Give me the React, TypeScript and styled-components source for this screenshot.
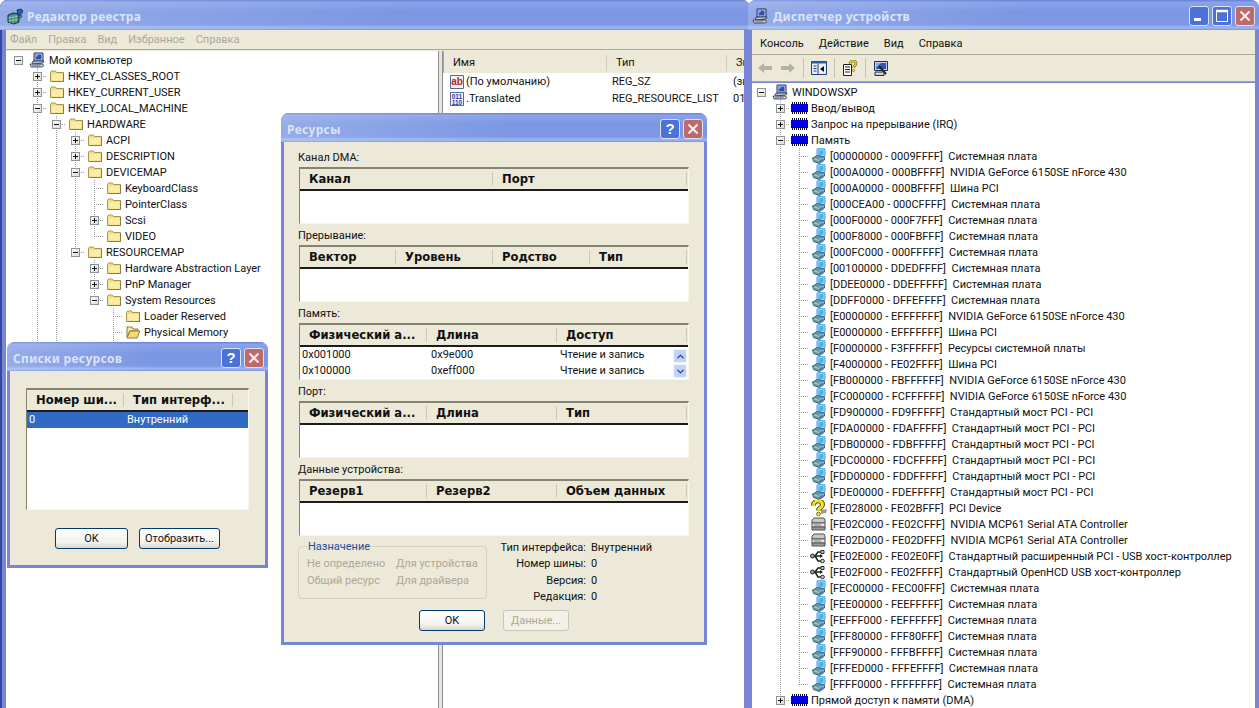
import React from "react"
import styled, { createGlobalStyle } from "styled-components"
import { ChevronUp, ChevronDown } from "lucide-react"

const GlobalStyle = createGlobalStyle`
  html, body {
    margin: 0;
    background: #fff;
    overflow: hidden;
  }
  body {
    font-family: Roboto, "Liberation Sans", Arial, sans-serif;
    font-size: 11px;
    color: #111;
  }
`

/* ---------- icons ---------- */

function FolderIcon(props: { open?: boolean }) {
  if (props.open) {
    return (
      <svg width="16" height="16" viewBox="0 0 16 16">
        <path d="M2 3h5l1 2h5v2H5L2 13z" fill="#f6e7a0" stroke="#8d7d35" />
        <path d="M5 7h10l-3 7H2z" fill="#f3dc76" stroke="#8d7d35" />
      </svg>
    )
  }
  return (
    <svg width="16" height="16" viewBox="0 0 16 16">
      <path d="M1.5 4.5l1-1.5h4l1 1.5h7v9h-13z" fill="#f3dd7c" stroke="#a8974a" />
      <path d="M2.5 6h11v6.5h-11z" fill="#fbeda8" />
      <path d="M14.5 5v8.5h-12" fill="none" stroke="#8d7d35" />
    </svg>
  )
}

function ComputerIcon() {
  return (
    <svg width="18" height="16" viewBox="0 0 18 16">
      <path d="M5 1h9v8H5z" fill="#cfd6e6" stroke="#26304f" />
      <path d="M6.5 2.5h6v5h-6z" fill="#2b50b8" />
      <path d="M7 2.5h3l-3 3z" fill="#7fa6e8" />
      <path d="M3 10l3-1h9l-1 2-10 1z" fill="#b9c0cf" stroke="#26304f" strokeWidth="0.8" />
      <path d="M1 12h12l2 1.5-2 1.5H2z" fill="#d5d9e2" stroke="#26304f" strokeWidth="0.8" />
      <path d="M3 13h9M3 14h8" stroke="#59627a" strokeWidth="0.6" />
    </svg>
  )
}

function RegeditIcon() {
  return (
    <svg width="17" height="17" viewBox="0 0 17 17">
      <path d="M1 7l5-2 6 1v8l-5 2-6-2z" fill="#3f7f7a" stroke="#12323a" />
      <path d="M3 7.5v7M6 7v8.5M9 6.5v8M1.5 10l9-1.5M1.5 13l9-1.5" stroke="#a8dcc6" strokeWidth="0.7" />
      <path d="M10 2l4-1 2 2-3 5-2-1z" fill="#2f5fae" stroke="#12284a" strokeWidth="0.8" />
      <path d="M12 8l2-1 1 2-2 1z" fill="#7a8fb8" stroke="#12284a" strokeWidth="0.6" />
    </svg>
  )
}

function ChipIcon() {
  return (
    <svg width="17" height="16" viewBox="0 0 17 16">
      <path d="M1.500 2v2M3.500 2v2M5.500 2v2M7.500 2v2M9.500 2v2M11.500 2v2M13.500 2v2M15.500 2v2M1.500 12v2M3.500 12v2M5.500 12v2M7.500 12v2M9.500 12v2M11.500 12v2M13.500 12v2M15.500 12v2" stroke="#111" />
      <path d="M0 4h17v8H0z" fill="#0000e6" />
      <path d="M0 11.500h17" stroke="#00007a" />
    </svg>
  )
}

function SystemIcon() {
  return (
    <svg width="16" height="16" viewBox="0 0 16 16">
      <path d="M6 1l6-1 2 1v7l-6 2-2-1z" fill="#9adcf8" stroke="#4f9fd8" />
      <path d="M7.500 2.500l5-1v5l-5 1.500z" fill="#4fb2ee" />
      <path d="M1.500 10l5-2.500 7 1.500v3l-5 3.500-6-2z" fill="#6f97a8" stroke="#3f6484" />
      <path d="M3 11l5 1.500 4.500-2.500" fill="none" stroke="#a4dcc4" />
      <path d="M8 13l4-2.500v1.500l-4 2.500z" fill="#3f6fc0" />
    </svg>
  )
}

function UnknownIcon() {
  return (
    <svg width="18" height="16" viewBox="0 0 18 16">
      <path d="M11 10l6-1-1 4-5 1z" fill="#9a9a9a" />
      <path d="M3.500 5.500c0-6 9-6 9-1 0 3.500-4 3-4 6" fill="none" stroke="#5f5500" strokeWidth="5" />
      <path d="M3.500 5.500c0-6 9-6 9-1 0 3.500-4 3-4 6" fill="none" stroke="#f4e424" strokeWidth="3" />
      <circle cx="8.500" cy="14" r="1.900" fill="#f4e424" stroke="#5f5500" strokeWidth="0.800" />
    </svg>
  )
}

function ControllerIcon() {
  return (
    <svg width="17" height="16" viewBox="0 0 17 16">
      <path d="M4 2h10l1 2v3H2V4z" fill="#c8c8c8" stroke="#555" />
      <path d="M2 7h13v4H2z" fill="#e6e6e6" stroke="#555" />
      <path d="M2 11h13v3H2z" fill="#9a9a9a" stroke="#555" />
      <path d="M4 9h7" stroke="#777" />
    </svg>
  )
}

function UsbIcon() {
  return (
    <svg width="18" height="16" viewBox="0 0 18 16">
      <path d="M1 8h11M5 8l3-4h3M5 8l3 5h3" fill="none" stroke="#222" strokeWidth="1.5" />
      <path d="M13 8l-3-2v4z" fill="#222" />
      <circle cx="2.5" cy="8" r="2" fill="#9aa0a8" stroke="#222" />
      <path d="M11 2.5h3v3h-3z" fill="#d0d4da" stroke="#222" />
      <circle cx="12.5" cy="13" r="1.8" fill="#d0d4da" stroke="#222" />
    </svg>
  )
}

function StringValueIcon() {
  return (
    <svg width="16" height="16" viewBox="0 0 16 16">
      <path d="M1.5 1.5h13v13h-13z" fill="#f4f4f4" stroke="#5a6a8c" />
      <text x="8" y="10.5" textAnchor="middle" fontFamily="Liberation Sans" fontWeight="700" fontSize="10" fill="#c02020">ab</text>
    </svg>
  )
}

function BinaryValueIcon() {
  return (
    <svg width="16" height="16" viewBox="0 0 16 16">
      <path d="M1.5 1.5h13v13h-13z" fill="#f4f4f4" stroke="#5a6a8c" />
      <text x="8" y="7.5" textAnchor="middle" fontFamily="Liberation Sans" fontWeight="700" fontSize="6.5" fill="#1c3fa8">011</text>
      <text x="8" y="13.5" textAnchor="middle" fontFamily="Liberation Sans" fontWeight="700" fontSize="6.5" fill="#1c3fa8">110</text>
    </svg>
  )
}

function ArrowTool(props: { flip?: boolean }) {
  return (
    <svg width="16" height="16" viewBox="0 0 16 16" style={props.flip ? { transform: "scaleX(-1)" } : undefined}>
      <path d="M1 8l6-5v3h8v4H7v3z" fill="#b4b2a4" />
    </svg>
  )
}

function TreeToggleTool() {
  return (
    <svg width="16" height="16" viewBox="0 0 16 16">
      <path d="M.5 1.5h15v13H.5z" fill="#e8eef8" stroke="#1f3f7a" />
      <path d="M.5 1.5h15v2H.5z" fill="#2f5ca8" />
      <path d="M7 3.5v11" stroke="#1f3f7a" />
      <path d="M2.5 6h3M2.5 8.5h3M2.5 11h3" stroke="#1f3f7a" />
      <path d="M13 6v6L9 9z" fill="#111" />
    </svg>
  )
}

function HelpPageTool() {
  return (
    <svg width="16" height="17" viewBox="0 0 16 17">
      <path d="M1.5 4.5h8v11h-8z" fill="#fff" stroke="#222" />
      <path d="M3 7h5M3 9.5h5M3 12h5" stroke="#222" />
      <path d="M8 4c0-4 6-4 6-.5 0 2-2.5 2-2.5 4.500" fill="none" stroke="#6f6200" strokeWidth="2.600" />
      <path d="M8 4c0-4 6-4 6-.5 0 2-2.5 2-2.5 4.500" fill="none" stroke="#f2da3c" strokeWidth="1.300" />
      <circle cx="11.500" cy="10.500" r="1.200" fill="#f2da3c" stroke="#6f6200" strokeWidth="0.500" />
    </svg>
  )
}

function DeviceTool() {
  return (
    <svg width="16" height="17" viewBox="0 0 16 17">
      <path d="M1.500 1.500h13v9h-13z" fill="#c8d4ea" stroke="#1f2f50" />
      <path d="M3 3h10v6H3z" fill="#2f55b8" />
      <path d="M3 3h5L3 8z" fill="#7fa6e8" />
      <path d="M6 6l7 8" stroke="#222" strokeWidth="2" />
      <path d="M2 12h9v3.500H2z" fill="#cfd6c0" stroke="#1f2f50" />
    </svg>
  )
}

/* ---------- window frame ---------- */

const Desktop = styled.div`
  position: relative;
  width: 1259px;
  height: 708px;
  overflow: hidden;
  background: #fff;
`

const XpWindow = styled.section<{ $left: number; $top: number; $width: number; $height: number; $frame?: number }>`
  position: absolute;
  isolation: isolate;
  left: ${(p) => p.$left}px;
  top: ${(p) => p.$top}px;
  width: ${(p) => p.$width}px;
  height: ${(p) => p.$height}px;
  box-sizing: border-box;
  display: flex;
  flex-direction: column;
  border-radius: 8px 8px 0 0;
  background: #7785d4;
  padding: 0 ${(p) => p.$frame ?? 3}px ${(p) => p.$frame ?? 3}px;
  overflow: hidden;
`

const RegistryFrame = styled(XpWindow)`
  box-shadow: inset 2px 0 #33489f;
`

const TitleBar = styled.header<{ $height: number; $frame: number; $left?: number }>`
  flex: 0 0 ${(p) => p.$height}px;
  box-sizing: border-box;
  margin: 0 -${(p) => p.$frame}px;
  padding: 2px 4px 0 ${(p) => p.$left ?? 6}px;
  display: flex;
  align-items: center;
  gap: 3px;
  background:
    linear-gradient(90deg, rgba(255, 255, 255, 0.2), rgba(255, 255, 255, 0) 55%),
    linear-gradient(180deg, #6480d8 0, #8aa3ea 8%, #7b96e2 40%, #7c98e4 82%, #a0b8f2 93%, #7590de 100%);
`

const TitleText = styled.h1`
  flex: 1;
  margin: 0;
  padding-top: 1px;
  font-family: "Noto Sans", "Liberation Sans", sans-serif;
  font-size: 12px;
  font-weight: 700;
  letter-spacing: 0.3px;
  color: #d9e4f8;
`

const CaptionButton = styled.span<{ $danger?: boolean }>`
  width: 20px;
  height: 20px;
  box-sizing: border-box;
  border: 1px solid #dbe3f6;
  border-radius: 3px;
  display: flex;
  align-items: center;
  justify-content: center;
  background: ${(p) => (p.$danger ? "#bd6a6c" : "#4c71d8")};
  color: #fff;
  font-family: "Liberation Sans", sans-serif;
  font-size: 15px;
  font-weight: 700;
`

function CloseGlyph() {
  return (
    <svg width="12" height="12" viewBox="0 0 12 12">
      <path d="M1.500 1.500l9 9M10.500 1.500l-9 9" stroke="#f6eaea" strokeWidth="2.200" />
    </svg>
  )
}

function MinimizeGlyph() {
  return (
    <svg width="12" height="12" viewBox="0 0 12 12">
      <path d="M1 8h7v3H1z" fill="#fff" />
    </svg>
  )
}

function MaximizeGlyph() {
  return (
    <svg width="14" height="14" viewBox="0 0 14 14">
      <path d="M1.500 1.500h11v11h-11z" fill="none" stroke="#fff" />
      <path d="M1 2h12" stroke="#fff" strokeWidth="2.500" />
    </svg>
  )
}

const MenuBar = styled.nav<{ $height: number; $offset: number; $gap: number; $muted?: boolean }>`
  flex: 0 0 ${(p) => p.$height}px;
  box-sizing: border-box;
  display: flex;
  align-items: center;
  gap: ${(p) => p.$gap}px;
  padding: ${(p) => (p.$height > 20 ? "2px" : "0")} 0 0 ${(p) => p.$offset}px;
  background: #ece9d8;
  border-bottom: 1px solid #aca899;
  color: ${(p) => (p.$muted ? "#aca899" : "#111")};
`

/* ---------- tree ---------- */

type TreeNode = {
  label: string
  icon: React.ReactNode
  children?: TreeNode[]
  collapsed?: boolean
}

const TreeList = styled.div<{ $left: number }>`
  padding: 1px 0 0 ${(p) => p.$left}px;
  white-space: pre;
`

const TreeRowBox = styled.div`
  height: 16px;
  display: flex;
  align-items: center;
`

const GuideCell = styled.span<{ $kind: "none" | "pipe" | "tee" | "ell" }>`
  position: relative;
  flex: 0 0 19px;
  height: 16px;

  &::before {
    content: "";
    display: ${(p) => (p.$kind === "none" ? "none" : "block")};
    position: absolute;
    left: 9px;
    top: 0;
    width: 1px;
    height: ${(p) => (p.$kind === "ell" ? "8px" : "16px")};
    background: repeating-linear-gradient(180deg, #9a9a9a 0 1px, transparent 1px 2px);
  }

  &::after {
    content: "";
    display: ${(p) => (p.$kind === "tee" || p.$kind === "ell" ? "block" : "none")};
    position: absolute;
    left: 9px;
    top: 8px;
    width: 10px;
    height: 1px;
    background: repeating-linear-gradient(90deg, #9a9a9a 0 1px, transparent 1px 2px);
  }
`

const Expander = styled.span<{ $closed: boolean }>`
  position: absolute;
  z-index: 1;
  left: 5px;
  top: 4px;
  width: 9px;
  height: 9px;
  box-sizing: border-box;
  border: 1px solid #8c9298;
  background: linear-gradient(135deg, #fff, #dcdcd2);

  &::before {
    content: "";
    position: absolute;
    left: 1px;
    top: 3px;
    width: 5px;
    height: 1px;
    background: #111;
  }

  &::after {
    content: "";
    display: ${(p) => (p.$closed ? "block" : "none")};
    position: absolute;
    left: 3px;
    top: 1px;
    width: 1px;
    height: 5px;
    background: #111;
  }
`

const TreeIconCell = styled.span`
  flex: 0 0 19px;
  height: 16px;
  display: flex;
  align-items: center;
  justify-content: center;
`

const TreeLabel = styled.span`
  padding: 2px 0 0 2px;
  line-height: 16px;
`

function renderTree(nodes: TreeNode[], level: number, pipes: boolean[]): React.ReactNode[] {
  return nodes.flatMap((node, index) => {
    const last = index === nodes.length - 1
    const kids = node.children ?? []
    const hasExpander = node.collapsed || kids.length > 0
    const connector = level === 0 ? "none" : last ? "ell" : "tee"
    const row = (
      <TreeRowBox key={`${level}-${index}-${node.label}`}>
        {pipes.map((on, i) => (
          <GuideCell key={i} $kind={on ? "pipe" : "none"} />
        ))}
        <GuideCell $kind={connector}>
          {hasExpander && <Expander $closed={!!node.collapsed} />}
        </GuideCell>
        <TreeIconCell>{node.icon}</TreeIconCell>
        <TreeLabel>{node.label}</TreeLabel>
      </TreeRowBox>
    )
    if (node.collapsed) return [row]
    return [row, ...renderTree(kids, level + 1, [...pipes, level > 0 && !last])]
  })
}

const folder = (label: string, children?: TreeNode[], collapsed?: boolean): TreeNode => ({
  label,
  icon: <FolderIcon />,
  children,
  collapsed,
})

// the last rows sit behind the small dialog, only their guide lines and a folder tip show
const registryTree: TreeNode[] = [
  {
    label: "Мой компьютер",
    icon: <ComputerIcon />,
    children: [
      folder("HKEY_CLASSES_ROOT", undefined, true),
      folder("HKEY_CURRENT_USER", undefined, true),
      folder("HKEY_LOCAL_MACHINE", [
        folder("HARDWARE", [
          folder("ACPI", undefined, true),
          folder("DESCRIPTION", undefined, true),
          folder("DEVICEMAP", [
            folder("KeyboardClass"),
            folder("PointerClass"),
            folder("Scsi", undefined, true),
            folder("VIDEO"),
          ]),
          folder("RESOURCEMAP", [
            folder("Hardware Abstraction Layer", undefined, true),
            folder("PnP Manager", undefined, true),
            folder("System Resources", [
              folder("Loader Reserved"),
              { label: "Physical Memory", icon: <FolderIcon open /> },
              folder(""),
            ]),
          ]),
        ]),
        folder("", undefined, true),
      ]),
      folder("", undefined, true),
    ],
  },
]

const BOARD = "Системная плата"
const NVIDIA = "NVIDIA GeForce 6150SE nForce 430"
const PCI_BUS = "Шина PCI"
const BRIDGE = "Стандартный мост PCI - PCI"
const SATA = "NVIDIA MCP61 Serial ATA Controller"

const memoryRanges: [string, string, React.ReactNode?][] = [
  ["00000000 - 0009FFFF", BOARD],
  ["000A0000 - 000BFFFF", NVIDIA],
  ["000A0000 - 000BFFFF", PCI_BUS],
  ["000CEA00 - 000CFFFF", BOARD],
  ["000F0000 - 000F7FFF", BOARD],
  ["000F8000 - 000FBFFF", BOARD],
  ["000FC000 - 000FFFFF", BOARD],
  ["00100000 - DDEDFFFF", BOARD],
  ["DDEE0000 - DDEFFFFF", BOARD],
  ["DDFF0000 - DFFEFFFF", BOARD],
  ["E0000000 - EFFFFFFF", NVIDIA],
  ["E0000000 - EFFFFFFF", PCI_BUS],
  ["F0000000 - F3FFFFFF", "Ресурсы системной платы"],
  ["F4000000 - FE02FFFF", PCI_BUS],
  ["FB000000 - FBFFFFFF", NVIDIA],
  ["FC000000 - FCFFFFFF", NVIDIA],
  ["FD900000 - FD9FFFFF", BRIDGE],
  ["FDA00000 - FDAFFFFF", BRIDGE],
  ["FDB00000 - FDBFFFFF", BRIDGE],
  ["FDC00000 - FDCFFFFF", BRIDGE],
  ["FDD00000 - FDDFFFFF", BRIDGE],
  ["FDE00000 - FDEFFFFF", BRIDGE],
  ["FE028000 - FE02BFFF", "PCI Device", <UnknownIcon />],
  ["FE02C000 - FE02CFFF", SATA, <ControllerIcon />],
  ["FE02D000 - FE02DFFF", SATA, <ControllerIcon />],
  ["FE02E000 - FE02E0FF", "Стандартный расширенный PCI - USB хост-контроллер", <UsbIcon />],
  ["FE02F000 - FE02FFFF", "Стандартный OpenHCD USB хост-контроллер", <UsbIcon />],
  ["FEC00000 - FEC00FFF", BOARD],
  ["FEE00000 - FEEFFFFF", BOARD],
  ["FEFFF000 - FEFFFFFF", BOARD],
  ["FFF80000 - FFF80FFF", BOARD],
  ["FFF90000 - FFFBFFFF", BOARD],
  ["FFFED000 - FFFEFFFF", BOARD],
  ["FFFF0000 - FFFFFFFF", BOARD],
]

const deviceTree: TreeNode[] = [
  {
    label: "WINDOWSXP",
    icon: <ComputerIcon />,
    children: [
      { label: "Ввод/вывод", icon: <ChipIcon />, collapsed: true },
      { label: "Запрос на прерывание (IRQ)", icon: <ChipIcon />, collapsed: true },
      {
        label: "Память",
        icon: <ChipIcon />,
        children: memoryRanges.map(([range, name, icon]) => ({
          label: `[${range}]  ${name}`,
          icon: icon ?? <SystemIcon />,
        })),
      },
      { label: "Прямой доступ к памяти (DMA)", icon: <ChipIcon />, collapsed: true },
    ],
  },
]

/* ---------- registry editor ---------- */

const RegistryBody = styled.div`
  flex: 1;
  display: flex;
  min-height: 0;
  padding-top: 1px;
  background: #ece9d8;
`

const TreePane = styled.div`
  flex: 0 0 432px;
  background: #fff;
  overflow: hidden;
`

const Splitter = styled.div`
  flex: 0 0 5px;
  box-sizing: border-box;
  background: #e4e6e0;
  border-left: 1px solid #8c8f8c;
  border-right: 1px solid #8c8f8c;
`

const ValuePane = styled.div`
  flex: 1;
  min-width: 0;
  background: #fff;
  overflow: hidden;
  white-space: nowrap;
`

const ValueHeader = styled.div`
  height: 20px;
  padding-top: 2px;
  display: flex;
  align-items: center;
  background: #ece9d8;
  border-left: 1px solid #aca899;
`

const ValueHeaderCell = styled.span<{ $width: number }>`
  flex: 0 0 ${(p) => p.$width}px;
  box-sizing: border-box;
  padding-left: 9px;
  line-height: 16px;
  border-right: 1px solid #cfccbb;
`

const ValueRow = styled.div`
  height: 17px;
  display: flex;
  align-items: center;
  padding-left: 6px;
`

const ValueCell = styled.span<{ $width: number }>`
  flex: 0 0 ${(p) => p.$width}px;
  display: flex;
  align-items: center;
  gap: 1px;
`

/* ---------- device manager ---------- */

const DeviceToolbar = styled.div`
  flex: 0 0 27px;
  box-sizing: border-box;
  display: flex;
  align-items: center;
  gap: 7px;
  padding-left: 5px;
  background: #ece9d8;
  border-bottom: 1px solid #aca899;
`

const ToolSeparator = styled.span`
  width: 1px;
  height: 20px;
  background: #c5c2b0;
`

const DeviceBody = styled.div`
  flex: 1;
  min-height: 0;
  margin-top: 1px;
  background: #fff;
  overflow: hidden;
`

/* ---------- dialogs ---------- */

const DialogBody = styled.div<{ $paddingTop: number }>`
  flex: 1;
  min-height: 0;
  padding: ${(p) => p.$paddingTop}px 14px 0;
  background: #ece9d8;
`

const SectionLabel = styled.div`
  height: 18px;
  line-height: 20px;
  margin-bottom: 1px;
`

const ListBox = styled.div<{ $height: number; $inset: number; $width: number }>`
  box-sizing: border-box;
  height: ${(p) => p.$height}px;
  width: ${(p) => p.$width}px;
  margin: 0 0 2px ${(p) => p.$inset}px;
  background: #fff;
  border-top: 2px solid #85836f;
  border-left: 1px solid #85836f;
  border-right: 1px solid #f8f7ee;
  border-bottom: 1px solid #f8f7ee;
  overflow: hidden;
`

const ListHead = styled.div`
  display: flex;
  height: 22px;
  box-sizing: border-box;
  background: #ece9d8;
  border-bottom: 2px solid #1c1c1c;
`

const HeadCell = styled.span<{ $width: number }>`
  position: relative;
  flex: 0 0 ${(p) => p.$width}px;
  box-sizing: border-box;
  padding-left: 9px;
  font-family: "DejaVu Sans", sans-serif;
  font-size: 11.6px;
  font-weight: 700;
  line-height: 20px;
  white-space: nowrap;
  overflow: hidden;

  &::after {
    content: "";
    position: absolute;
    right: 0;
    top: 3px;
    width: 1px;
    height: 14px;
    background: #cbc8b6;
  }
`

const ListBodyRow = styled.div`
  display: flex;
  flex: 1;
`

const ListRows = styled.div`
  flex: 1;
`

const DataRow = styled.div<{ $selected?: boolean }>`
  display: flex;
  height: 16px;
  line-height: 15px;
  background: ${(p) => (p.$selected ? "#316ac5" : "transparent")};
  color: ${(p) => (p.$selected ? "#fff" : "#111")};
`

const DataCell = styled.span<{ $width: number }>`
  flex: 0 0 ${(p) => p.$width}px;
  box-sizing: border-box;
  padding-left: 2px;
  white-space: nowrap;
`

const ScrollColumn = styled.div`
  flex: 0 0 14px;
  margin: 2px 1px 0 0;
  display: flex;
  flex-direction: column;
  gap: 1px;
`

const ScrollButton = styled.span`
  height: 14px;
  display: flex;
  align-items: center;
  justify-content: center;
  border: 1px solid #eef2fb;
  border-radius: 2px;
  box-sizing: border-box;
  background: #c3d3f6;
  color: #24408c;
`

const BottomArea = styled.div`
  display: grid;
  grid-template-columns: 188px 1fr;
  column-gap: 14px;
  margin-top: 1px;
  height: 68px;
`

const PurposeGroup = styled.fieldset`
  margin: 2px 0 0;
  padding: 2px 8px 0;
  height: 59px;
  box-sizing: border-box;
  border: 1px solid #d3d1c2;
  border-radius: 4px;
  display: grid;
  grid-template-columns: 89px 1fr;
  grid-auto-rows: 17px;
  align-content: start;
  color: #aca899;
  line-height: 17px;
  white-space: nowrap;
`

const PurposeLegend = styled.legend`
  padding: 0 1px;
  line-height: 13px;
  color: #1b4f9c;
`

const InfoGrid = styled.dl`
  margin: 2px 0 0;
  display: grid;
  grid-template-columns: 86px auto;
  column-gap: 5px;
  grid-auto-rows: 16.4px;
  line-height: 16px;
  justify-content: start;
`

const InfoLabel = styled.dt`
  text-align: right;
  white-space: nowrap;
`

const InfoValue = styled.dd`
  margin: 0;
`

const ButtonRow = styled.div<{ $gap: number; $top: number }>`
  display: flex;
  justify-content: center;
  gap: ${(p) => p.$gap}px;
  margin-top: ${(p) => p.$top}px;
`

const DialogButton = styled.button<{ $width: number }>`
  width: ${(p) => p.$width}px;
  height: 21px;
  padding: 0;
  font: inherit;
  color: #111;
  border: 1px solid #003c74;
  border-radius: 3px;
  background: linear-gradient(180deg, #fff, #f4f3ec 70%, #dcd8c8);

  &:disabled {
    color: #aca899;
    border-color: #c9c7ba;
    background: #f3f1e6;
  }
`

type Column = { title: string; width: number }

function ResourceSection(props: { label: string; columns: Column[]; children?: React.ReactNode }) {
  return (
    <>
      <SectionLabel>{props.label}</SectionLabel>
      <ListBox $height={57} $inset={1} $width={390}>
        <ListHead>
          {props.columns.map((col) => (
            <HeadCell key={col.title} $width={col.width}>{col.title}</HeadCell>
          ))}
        </ListHead>
        {props.children}
      </ListBox>
    </>
  )
}

const addressColumns = [129, 129]

function App() {
  return (
    <Desktop>
      <GlobalStyle />

      <RegistryFrame $left={0} $top={0} $width={750} $height={740} $frame={6}>
        <TitleBar $height={30} $frame={6} $left={7}>
          <RegeditIcon />
          <TitleText>Редактор реестра</TitleText>
        </TitleBar>
        <MenuBar $height={20} $offset={4} $gap={11} $muted>
          <span>Файл</span>
          <span>Правка</span>
          <span>Вид</span>
          <span>Избранное</span>
          <span>Справка</span>
        </MenuBar>
        <RegistryBody>
          <TreePane>
            <TreeList $left={3}>{renderTree(registryTree, 0, [])}</TreeList>
          </TreePane>
          <Splitter />
          <ValuePane>
            <ValueHeader>
              <ValueHeaderCell $width={163}>Имя</ValueHeaderCell>
              <ValueHeaderCell $width={120}>Тип</ValueHeaderCell>
              <ValueHeaderCell $width={40}>Зн</ValueHeaderCell>
            </ValueHeader>
            <ValueRow>
              <ValueCell $width={163}><StringValueIcon />(По умолчанию)</ValueCell>
              <ValueCell $width={121}>REG_SZ</ValueCell>
              <ValueCell $width={20}>(зн</ValueCell>
            </ValueRow>
            <ValueRow>
              <ValueCell $width={163}><BinaryValueIcon />.Translated</ValueCell>
              <ValueCell $width={121}>REG_RESOURCE_LIST</ValueCell>
              <ValueCell $width={20}>01</ValueCell>
            </ValueRow>
          </ValuePane>
        </RegistryBody>
      </RegistryFrame>

      <XpWindow $left={748} $top={0} $width={511} $height={740} $frame={4}>
        <TitleBar $height={30} $frame={4} $left={4}>
          <ComputerIcon />
          <TitleText>Диспетчер устройств</TitleText>
          <CaptionButton><MinimizeGlyph /></CaptionButton>
          <CaptionButton><MaximizeGlyph /></CaptionButton>
          <CaptionButton $danger><CloseGlyph /></CaptionButton>
        </TitleBar>
        <MenuBar $height={25} $offset={8} $gap={15}>
          <span>Консоль</span>
          <span>Действие</span>
          <span>Вид</span>
          <span>Справка</span>
        </MenuBar>
        <DeviceToolbar>
          <ArrowTool />
          <ArrowTool flip />
          <ToolSeparator />
          <TreeToggleTool />
          <ToolSeparator />
          <HelpPageTool />
          <ToolSeparator />
          <DeviceTool />
        </DeviceToolbar>
        <DeviceBody>
          <TreeList $left={0}>{renderTree(deviceTree, 0, [])}</TreeList>
        </DeviceBody>
      </XpWindow>

      <XpWindow $left={281} $top={113} $width={426} $height={532}>
        <TitleBar $height={29} $frame={3}>
          <TitleText>Ресурсы</TitleText>
          <CaptionButton>?</CaptionButton>
          <CaptionButton $danger><CloseGlyph /></CaptionButton>
        </TitleBar>
        <DialogBody $paddingTop={6}>
          <ResourceSection
            label="Канал DMA:"
            columns={[
              { title: "Канал", width: 193 },
              { title: "Порт", width: 194 },
            ]}
          />
          <ResourceSection
            label="Прерывание:"
            columns={[
              { title: "Вектор", width: 96 },
              { title: "Уровень", width: 97 },
              { title: "Родство", width: 97 },
              { title: "Тип", width: 97 },
            ]}
          />
          <ResourceSection
            label="Память:"
            columns={[
              { title: "Физический а...", width: 127 },
              { title: "Длина", width: 130 },
              { title: "Доступ", width: 130 },
            ]}
          >
            <ListBodyRow>
              <ListRows>
                <DataRow>
                  <DataCell $width={addressColumns[0]}>0x001000</DataCell>
                  <DataCell $width={addressColumns[1]}>0x9e000</DataCell>
                  <DataCell $width={100}>Чтение и запись</DataCell>
                </DataRow>
                <DataRow>
                  <DataCell $width={addressColumns[0]}>0x100000</DataCell>
                  <DataCell $width={addressColumns[1]}>0xeff000</DataCell>
                  <DataCell $width={100}>Чтение и запись</DataCell>
                </DataRow>
              </ListRows>
              <ScrollColumn>
                <ScrollButton><ChevronUp size={11} strokeWidth={3} /></ScrollButton>
                <ScrollButton><ChevronDown size={11} strokeWidth={3} /></ScrollButton>
              </ScrollColumn>
            </ListBodyRow>
          </ResourceSection>
          <ResourceSection
            label="Порт:"
            columns={[
              { title: "Физический а...", width: 127 },
              { title: "Длина", width: 130 },
              { title: "Тип", width: 130 },
            ]}
          />
          <ResourceSection
            label="Данные устройства:"
            columns={[
              { title: "Резерв1", width: 127 },
              { title: "Резерв2", width: 130 },
              { title: "Объем данных", width: 130 },
            ]}
          />
          <BottomArea>
            <PurposeGroup>
              <PurposeLegend>Назначение</PurposeLegend>
              <span>Не определено</span>
              <span>Для устройства</span>
              <span>Общий ресурс</span>
              <span>Для драйвера</span>
            </PurposeGroup>
            <InfoGrid>
              <InfoLabel>Тип интерфейса:</InfoLabel>
              <InfoValue>Внутренний</InfoValue>
              <InfoLabel>Номер шины:</InfoLabel>
              <InfoValue>0</InfoValue>
              <InfoLabel>Версия:</InfoLabel>
              <InfoValue>0</InfoValue>
              <InfoLabel>Редакция:</InfoLabel>
              <InfoValue>0</InfoValue>
            </InfoGrid>
          </BottomArea>
          <ButtonRow $gap={18} $top={4}>
            <DialogButton $width={66}>OK</DialogButton>
            <DialogButton $width={66} disabled>Данные...</DialogButton>
          </ButtonRow>
        </DialogBody>
      </XpWindow>

      <XpWindow $left={7} $top={342} $width={261} $height={226}>
        <TitleBar $height={29} $frame={3}>
          <TitleText>Списки ресурсов</TitleText>
          <CaptionButton>?</CaptionButton>
          <CaptionButton $danger><CloseGlyph /></CaptionButton>
        </TitleBar>
        <DialogBody $paddingTop={17}>
          <ListBox $height={122} $inset={2} $width={223}>
            <ListHead>
              <HeadCell $width={97}>Номер ши...</HeadCell>
              <HeadCell $width={109}>Тип интерф...</HeadCell>
            </ListHead>
            <DataRow $selected>
              <DataCell $width={98}>0</DataCell>
              <DataCell $width={100}>Внутренний</DataCell>
            </DataRow>
          </ListBox>
          <ButtonRow $gap={11} $top={18}>
            <DialogButton $width={73}>OK</DialogButton>
            <DialogButton $width={81}>Отобразить...</DialogButton>
          </ButtonRow>
        </DialogBody>
      </XpWindow>
    </Desktop>
  )
}

export default App
